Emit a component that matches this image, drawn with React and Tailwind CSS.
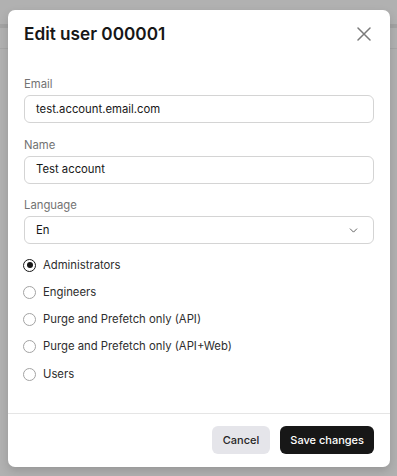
import React, { useState } from 'react'
import { ChevronDown } from 'lucide-react'

const roles = [
  'Administrators',
  'Engineers',
  'Purge and Prefetch only (API)',
  'Purge and Prefetch only (API+Web)',
  'Users',
]

const Field = ({ label, value, select }) => (
  <div className='flex flex-col'>
    <label className='text-[11.3px] leading-[16px] text-[#737373] mb-[3px]'>{label}</label>
    <div className='h-[28px] border border-[#d4d4d4] rounded-[6px] flex items-center justify-between pl-[11px] pr-[13px] text-[11.3px] text-[#171717]'>
      <span>{value}</span>
      {select && <ChevronDown className='w-[13px] h-[13px] text-[#404040]' strokeWidth={1.5} />}
    </div>
  </div>
)

const App = () => {
  const [role, setRole] = useState('Administrators')

  return (
    <div className='relative w-full h-[476px] bg-[#b1b1b1] overflow-hidden' style={{ fontFamily: 'Inter, "Noto Sans", sans-serif' }}>
      {/* backdrop page */}
      <div className='h-[24px]'></div>
      <div className='h-[4px] bg-[#a3a3a3]'></div>
      <div className='h-[20px]'></div>
      <div className='h-px bg-[#a6a6a6]'></div>

      {/* dialog */}
      <div className='absolute left-[8px] right-[7px] top-[10px] bg-white rounded-[7px] shadow-[0_4px_10px_rgba(0,0,0,0.15)]'>
        <div className='flex items-center justify-between pl-[16px] pr-[19px] pt-[12px] pb-[30px]'>
          <h2 className='text-[17.2px] leading-[24px] font-semibold text-[#171717]'>Edit user 000001</h2>
          <svg width='14' height='14' viewBox='0 0 14 14' fill='none' stroke='#7a7a7a' strokeWidth='1.5' strokeLinecap='round'>
            <path d='M1 1L13 13M13 1L1 13' />
          </svg>
        </div>

        <div className='px-[16px] flex flex-col gap-[13.5px]'>
          <Field label='Email' value='test.account.email.com' />
          <Field label='Name' value='Test account' />
          <Field label='Language' value='En' select />
        </div>

        <div className='px-[15px] pt-[13px] flex flex-col gap-[11.3px]'>
          {roles.map((r) => (
            <label key={r} className='flex items-center gap-[7px] h-[16px] text-[11.3px] text-[#2e2e2e] cursor-pointer' onClick={() => setRole(r)}>
              {role === r ? (
                <span className='w-[13px] h-[13px] rounded-full border border-[#171717] flex items-center justify-center'>
                  <span className='w-[6px] h-[6px] rounded-full bg-[#171717]'></span>
                </span>
              ) : (
                <span className='w-[13px] h-[13px] rounded-full border border-[#a3a3a3]'></span>
              )}
              <span>{r}</span>
            </label>
          ))}
        </div>

        <div className='mt-[31px] border-t border-[#e5e5e5] flex justify-end gap-[10px] px-[16px] pt-[12px] pb-[13px]'>
          <button className='h-[28px] px-[11px] rounded-[6px] bg-[#e5e5ea] text-[11px] font-medium text-[#262626]'>Cancel</button>
          <button className='h-[28px] px-[10px] rounded-[6px] bg-[#171717] text-[11px] font-medium text-white'>Save changes</button>
        </div>
      </div>
    </div>
  )
}

export default App
